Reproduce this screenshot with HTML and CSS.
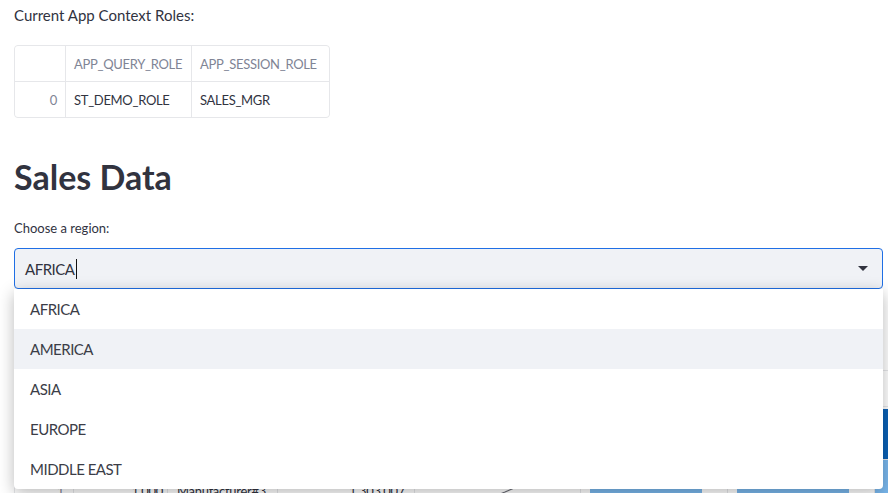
FILE: index.html
```html
<!DOCTYPE html>
<html lang="en">
<head>
<meta charset="utf-8">
<title>Sales Data</title>
<link rel="stylesheet" href="styles.css">
</head>
<body>
<main class="app">
  <p class="caption">Current App Context Roles:</p>
  <div class="roles">
    <div class="cell head"></div>
    <div class="cell head">APP_QUERY_ROLE</div>
    <div class="cell head">APP_SESSION_ROLE</div>
    <div class="cell idx">0</div>
    <div class="cell">ST_DEMO_ROLE</div>
    <div class="cell">SALES_MGR</div>
  </div>

  <h2 class="title">Sales Data</h2>

  <div class="select-block">
    <label class="label">Choose a region:</label>
    <div class="select">
      <div class="select-box">
        <span class="value">AFRICA</span><span class="cursor"></span>
        <svg class="arrow" width="10" height="5" viewBox="0 0 10 5"><polygon points="0,0 10,0 5,5" fill="#31333f"/></svg>
      </div>
      <ul class="menu">
        <li class="option">AFRICA</li>
        <li class="option active">AMERICA</li>
        <li class="option">ASIA</li>
        <li class="option">EUROPE</li>
        <li class="option">MIDDLE EAST</li>
      </ul>
    </div>
  </div>

  <div class="sales-frame">
    <div class="sales">
      <div class="sc sh"></div>
      <div class="sc sh"></div>
      <div class="sc sh"></div>
      <div class="sc sh"></div>
      <div class="sc sh"></div>
      <div class="sc sh"></div>
      <div class="sc sh"></div>
      <div class="sc sh"></div>

      <div class="sc r0"></div>
      <div class="sc r0"></div>
      <div class="sc r0"></div>
      <div class="sc r0"></div>
      <div class="sc r0"></div>
      <div class="sc r0 barcell"><div class="bar dark"></div></div>
      <div class="sc r0 barcell"><div class="bar dark"></div></div>
      <div class="sc r0 fullcell"><div class="fill dark"></div></div>

      <div class="sc num r1 gray">1</div>
      <div class="sc num r1">1,000</div>
      <div class="sc r1">Manufacturer#3</div>
      <div class="sc num r1 wide">1,303,007</div>
      <div class="sc r1 spark"><svg width="165" height="52" viewBox="0 0 165 52"><polyline points="0,52 40,46 80,36 90,32 97,29 120,18 165,10" fill="none" stroke="#6b6d76" stroke-width="1.2"/></svg></div>
      <div class="sc r1 barcell"><div class="bar light"></div></div>
      <div class="sc r1 barcell"><div class="bar light"></div></div>
      <div class="sc r1 fullcell"><div class="fill light"></div></div>
    </div>
  </div>
</main>
</body>
</html>
```
FILE: styles.css
```css
* { box-sizing: border-box; }

html, body {
  margin: 0;
  padding: 0;
  overflow: hidden;
  background: #ffffff;
}

body {
  font-family: Lato, "Noto Sans", sans-serif;
  color: #31333f;
}

.app {
  width: 888px;
  padding: 3px 5px 0 14px;
}

.caption {
  margin: 0;
  font-size: 15px;
  line-height: 24px;
}

/* roles dataframe */
.roles {
  margin-top: 18px;
  display: grid;
  grid-template-columns: 50px 125px 137px;
  grid-auto-rows: 35px;
  gap: 1px;
  width: 316px;
  background: #e6e7ea;
  border: 1px solid #e6e7ea;
  border-radius: 4px;
  overflow: hidden;
  font-size: 13px;
  letter-spacing: -0.3px;
}

.cell {
  background: #ffffff;
  display: flex;
  align-items: center;
  padding: 0 8px;
  white-space: nowrap;
}

.cell.head { color: #808495; }
.cell.idx { justify-content: flex-end; color: #808495; }

.title {
  margin: 37px 0 0;
  font-size: 34px;
  line-height: 44px;
  font-weight: 700;
}

.label {
  display: block;
  margin-top: 19px;
  font-size: 13px;
  line-height: 20px;
}

.select {
  position: relative;
  margin-top: 10px;
}

.select-box {
  height: 41px;
  border: 1px solid #1f6fe5;
  border-radius: 4px;
  background: #f0f2f6;
  display: flex;
  align-items: center;
  padding: 0 14px 0 10px;
  font-size: 15px;
  letter-spacing: -0.5px;
  line-height: 20px;
}

.cursor {
  width: 1px;
  height: 20px;
  margin-left: 2px;
  background: #111111;
}

.arrow { margin-left: auto; }

.menu {
  position: absolute;
  top: 41px;
  left: 0;
  right: 0;
  margin: 0;
  padding: 0;
  list-style: none;
  background: #ffffff;
  border-radius: 0 0 4px 4px;
  box-shadow: 0 4px 16px rgba(0, 0, 0, 0.28);
  z-index: 10;
}

.option {
  height: 40px;
  display: flex;
  align-items: center;
  padding-left: 16px;
  font-size: 15px;
  letter-spacing: -0.5px;
  line-height: 20px;
  color: #3b3d47;
}

.option.active { background: #f0f2f6; }

/* sales dataframe behind the menu */
.sales-frame {
  margin-top: 81px;
  width: 874px;
  overflow: hidden;
}

.sales {
  display: grid;
  grid-template-columns: 58px 93px 109px 136px 165px 146px 146px 150px;
  grid-template-rows: 35px 52px 52px;
  gap: 1px;
  width: max-content;
  background: #e6e7ea;
  border: 1px solid #e6e7ea;
  font-size: 13px;
  letter-spacing: -0.3px;
}

.sc {
  background: #ffffff;
  display: flex;
  align-items: center;
  padding: 0 9px;
  white-space: nowrap;
}

.sc.num { justify-content: flex-end; padding-right: 4px; }
.sc.num.wide { padding-right: 9px; }
.sc.gray { color: #808495; padding-right: 9px; }
.sc.r1 { align-items: flex-start; padding-top: 23px; }
.sc.spark, .sc.barcell, .sc.fullcell { padding: 0; align-items: stretch; }

.bar { width: 112px; margin-left: 9px; }
.sc.r0 .bar { margin-top: 2px; }
.fill { flex: 1; }
.sc.r0 .fill { margin-top: 2px; }

.dark { background: #0b61b6; }
.light { background: #7ab8ee; }
```
